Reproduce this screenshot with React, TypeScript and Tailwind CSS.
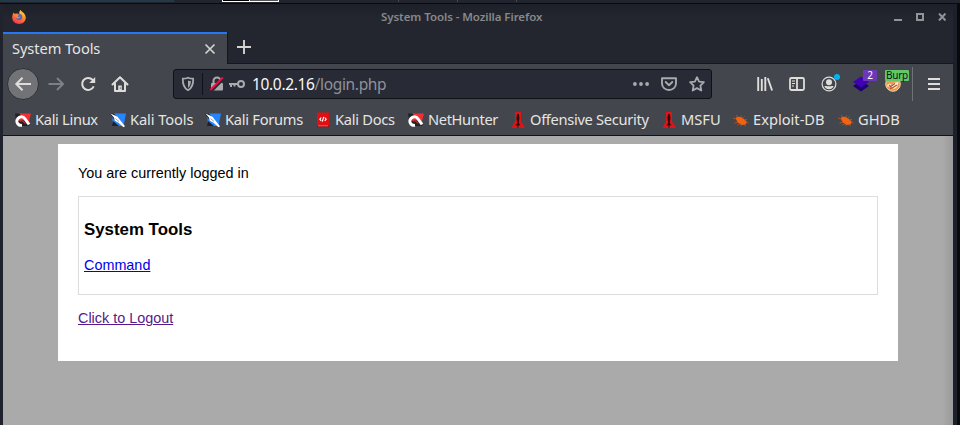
import React from "react";

type IconName = "magnet" | "knife" | "docs" | "offsec" | "bug";

function BookmarkIcon({ name }: { name: IconName }) {
  return (
    <svg width="16" height="16" viewBox="0 0 16 16" className="shrink-0">
      {name === "magnet" && (
        <>
          <path d="M4 1.500h12l-3 11H3z" fill="#f22f35" />
          <path d="M0 1.500h4.500l1.500 2L1 8zM3 9l9-1 2 6H5z" fill="#202126" />
          <path d="M14 12.300L10 6.800C8.700 5 6.400 4.300 4.300 5.400 2 6.600 1.200 9 2.400 11.200c.8 1.500 2.500 2.300 4.600 2.100" fill="none" stroke="#fff" strokeWidth="2.900" />
          <path d="M5 9.700c1-1.300 2.300-1.200 3.300-.2l2 2.200" fill="none" stroke="#c5222b" strokeWidth="1.200" />
        </>
      )}
      {name === "knife" && (
        <>
          <path d="M2 1.500h14l-2.500 12.500H3z" fill="#2684ff" />
          <path d="M0 1.500h4l3 4-3 2zM3 9l6 5H2z" fill="#202126" />
          <path d="M0.500 1.500l7 3.200 3.500 4.600 4 5-1.500 1-5-4.600-3.600-2-1-3.200z" fill="#fff" />
          <path d="M5.500 6.500l3.500 3" stroke="#777" strokeWidth=".7" />
        </>
      )}
      {name === "docs" && (
        <>
          <path d="M2 .5h12v15H2z" fill="#e01012" />
          <path d="M2 13h12v2.500H2z" fill="#9e1115" />
          <path d="M3 13.800h10" stroke="#e7a0a0" strokeWidth=".7" />
          <path d="M6.300 5.500L4.800 7.200l1.500 1.600M9.700 5.500l1.500 1.700-1.500 1.600M8.700 5l-1.400 4.600" fill="none" stroke="#fff" strokeWidth="1.100" />
        </>
      )}
      {name === "offsec" && (
        <>
          <path d="M5 0h6v9.500l3.500 5V16H2v-1.500l3-5z" fill="#db1519" />
          <path d="M7.200 2h1.600l.6 4-.6 5 1.700 2.500-2-.5V15.500H7.400V13l-2 .7L7.200 11l-.8-5z" fill="#31080b" />
        </>
      )}
      {name === "bug" && (
        <>
          <path d="M2.500 6c2.500-2.200 5.800-1.500 8 .8l3.200 2.700-1 3.100-4 .5-4-2.500z" fill="#f26311" />
          <path d="M2.500 7L0 6M4.500 5.500L3.500 3M7.500 5.500l1-2M9.500 6.500l2-2M11 8l3-.5M13 10.500l2.500.5M4.500 10.500l-3 .5M6.500 12l-2 1M11 12.500l1.500 1.500M8.500 12.500l-1 1.500" stroke="#c9551e" strokeWidth=".8" />
        </>
      )}
    </svg>
  );
}

function Bookmark({ icon, label, className }: { icon: IconName; label: string; className: string }) {
  return (
    <div className={`flex h-full shrink-0 items-center gap-1 whitespace-nowrap ${className}`}>
      <BookmarkIcon name={icon} />
      <span className="-mt-[2px]">{label}</span>
    </div>
  );
}

function FirefoxLogo() {
  return (
    <svg width="14" height="14" viewBox="0 0 14 14">
      <defs>
        <linearGradient id="flame" x1=".8" y1="0" x2=".3" y2="1">
          <stop offset="0" stopColor="#ffe347" />
          <stop offset=".45" stopColor="#ff8a24" />
          <stop offset="1" stopColor="#f52d5d" />
        </linearGradient>
      </defs>
      <path d="M8.500 0c.6 1.300 2 1.700 3.200 3 3 3.400 2.600 7-.2 9.500-2.600 2-6.500 1.900-9 0C-.3 10.300-.5 6 1.500 2.500l1 1.300L5 3.500 7.300 4C7 2.300 7.400 1 8.500 0z" fill="url(#flame)" />
      <circle cx="7.200" cy="6.900" r="3" fill="#3b69d4" />
      <path d="M2.500 4l3 .3 1.800.8-2 1.200c1 .8 2.600.6 3.400.3-.6 2-3.500 2.300-4.700.8z" fill="#ff8729" />
    </svg>
  );
}

function NavIcon({ name }: { name: "forward" | "reload" | "home" }) {
  return (
    <svg width="18" height="18" viewBox="0 0 18 18" fill="none" strokeWidth="2">
      {name === "forward" && <path d="M1.500 9h14M10 3l6 6-6 6" stroke="#7d8085" />}
      {name === "reload" && (
        <>
          <path d="M14.700 11.300A6 6 0 1 1 13.500 4.700L15 6.300" stroke="#deddda" />
          <path d="M16.200 2v6h-6z" fill="#deddda" />
        </>
      )}
      {name === "home" && (
        <>
          <path d="M1.500 9.500L9 2.200l7.500 7.300M4 8.500V16h10V8.500" stroke="#deddda" strokeLinejoin="round" strokeLinecap="round" />
          <path d="M7.200 15.500v-5h3.600v5z" fill="#deddda" />
          <path d="M9.300 12.500v1.200" stroke="#43464d" strokeWidth="1" />
        </>
      )}
    </svg>
  );
}

function AddressBar() {
  return (
    <div className="ml-[44px] flex h-[30px] w-[539px] shrink-0 items-center rounded-[3px] border border-[#111217] bg-[#282a36]">
      <svg className="ml-[6px]" width="16" height="16" viewBox="0 0 16 16">
        <path d="M8 1.700c1.700.9 3.600 1 5.200 1 .2 5.500-1.300 9.400-5.200 11.500C4.100 12.100 2.600 8.200 2.800 2.700c1.600 0 3.500-.1 5.200-1z" fill="none" stroke="#a9aaad" strokeWidth="1.800" strokeLinejoin="round" />
        <path d="M8 4.400c1 .4 2 .6 2.900.6-.1 3.500-1 5.500-2.900 7z" fill="#a9aaad" />
      </svg>
      <div className="ml-[6px] h-[22px] w-px bg-[#111217]" />
      <svg className="ml-[6px]" width="16" height="16" viewBox="0 0 16 16">
        <path d="M4.500 7V5a3.500 3.500 0 0 1 7 0v2" fill="none" stroke="#a9aaad" strokeWidth="2" />
        <rect x="2" y="7" width="12" height="7.500" rx="1" fill="#a9aaad" />
        <path d="M2.500 15L15.500 2" stroke="#282a36" strokeWidth="2.500" />
        <path d="M1.300 14L14 1.300" stroke="#f40d43" strokeWidth="1.900" />
      </svg>
      <svg className="ml-[4px]" width="16" height="16" viewBox="0 0 16 16" fill="none" stroke="#a9aaad" strokeWidth="2">
        <circle cx="12" cy="8" r="3" />
        <path d="M0 8h9M2 8v3M5.500 8v2.500" />
      </svg>
      <div className="ml-[7px] text-[15.500px] leading-[22px] tracking-[-0.34px] text-[#909197]">
        <span className="text-[#f8f8f6]">10.0.2.16</span>/login.php
      </div>
      <svg className="ml-auto" width="16" height="16" viewBox="0 0 16 16" fill="#a9aaad">
        <circle cx="1.900" cy="8" r="1.900" /><circle cx="8" cy="8" r="1.900" /><circle cx="14.100" cy="8" r="1.900" />
      </svg>
      <svg className="ml-[12px]" width="16" height="16" viewBox="0 0 16 16" fill="none" stroke="#a9aaad" strokeWidth="1.900" strokeLinejoin="round" strokeLinecap="round">
        <path d="M1 2.200h14v5.300a7 6.500 0 0 1-14 0zM4.700 6L8 9.200 11.300 6" />
      </svg>
      <svg className="mr-[6px] ml-[12px]" width="16" height="16" viewBox="0 0 16 16" fill="none" stroke="#a9aaad" strokeWidth="1.800" strokeLinejoin="round">
        <path d="M8 1.200l2.100 4.400 4.800.6-3.500 3.400.9 4.900L8 12.100l-4.300 2.400.9-4.900L1.100 6.200l4.800-.6z" />
      </svg>
    </div>
  );
}

function ToolbarActions() {
  return (
    <div className="ml-[45px] flex h-full items-center">
      <svg width="16" height="16" viewBox="0 0 16 16" stroke="#deddda" strokeWidth="1.900" fill="none">
        <path d="M1.200 1v14M4.800 3v12M8.300 1v14M10.800 2.300l4.300 12.200" />
      </svg>
      <svg className="ml-4" width="16" height="16" viewBox="0 0 16 16" stroke="#deddda" strokeWidth="1.800" fill="none">
        <rect x="1" y="2" width="14" height="12" rx="1.500" /><path d="M8 2v12" />
        <path d="M3 5h3M3 7.500h3M3 10h2" strokeWidth="1.100" />
      </svg>
      <div className="relative ml-4 h-4 w-4">
        <svg width="16" height="16" viewBox="0 0 16 16" fill="#deddda">
          <circle cx="8" cy="8" r="6.900" fill="none" stroke="#deddda" strokeWidth="1.200" />
          <circle cx="8" cy="6.200" r="3" />
          <path d="M3.300 10.300c1.800-.6 2.400 0 4.700 0s2.900-.6 4.700 0A5.200 5.200 0 0 1 3.300 10.300z" />
        </svg>
        <span className="absolute -top-[2px] left-[13px] h-1.5 w-1.5 rounded-full bg-[#00b3f4]" />
      </div>
      <div className="relative ml-4 h-4 w-4">
        <svg width="16" height="16" viewBox="0 0 16 16">
          <path d="M8 4.500l8 5.500-8 5.500L0 10z" fill="#1e006f" />
          <path d="M8 .5l8 5.500-8 5.500L0 6z" fill="#4100b3" />
        </svg>
        <span className="absolute -top-[6px] left-[10px] h-[11px] w-[14px] rounded-[1px] bg-[#6b38b8] text-center text-[10px] leading-[11px] text-white">2</span>
      </div>
      <div className="relative ml-4 h-4 w-4">
        <svg width="16" height="16" viewBox="0 0 16 16">
          <circle cx="8" cy="8" r="7.300" fill="#f0994d" stroke="#f5cfac" />
          <path d="M1.500 10l3-2.500L7 9l2-2 4.500-1-1.500 5-3 2-2.500-2z" fill="#fff2de" />
          <path d="M4 9l1.700 1.400 4.300-3M5 12.500l3-1 4-2.500" fill="none" stroke="#a95225" strokeWidth="1.200" />
        </svg>
        <span className="absolute -top-[6px] left-0 h-[11px] w-6 rounded-[1px] bg-[#63c769] text-center text-[10px] leading-[11px] tracking-[-0.2px] text-[#101810]">Burp</span>
      </div>
      <div className="ml-[11px] h-[34px] w-px bg-[#6f7175]" />
      <svg className="ml-[15px]" width="12" height="16" viewBox="0 0 12 16" stroke="#deddda" strokeWidth="2">
        <path d="M0 3h12M0 8h12M0 13h12" />
      </svg>
    </div>
  );
}

export default function App() {
  return (
    <div className="flex h-[425px] w-[960px] flex-col overflow-hidden bg-[#191c23] font-['Noto_Sans',sans-serif]">
      <div className="flex h-[3px] shrink-0 bg-[#21232d]">
        <div className="h-[2px] w-[174px] bg-[#243947]" />
        <div className="ml-12 h-[2px] w-[28px] border-x border-b border-white bg-black" />
        <div className="h-[2px] w-[29px] border-r border-b border-white bg-[#555]" />
        <div className="ml-[119px] h-[2px] w-[59px] border-l border-[#444751]" />
        <div className="h-[2px] w-[59px] border-l border-[#444751]" />
        <div className="h-[2px] w-[60px] border-l border-[#444751]" />
      </div>
      <div className="flex min-h-0 flex-1 border-t border-[#090a0e]">
        <div className="w-[3px] shrink-0 bg-[#20232d]" />
        <div className="flex w-[950px] shrink-0 flex-col">
          <header className="flex h-[28px] shrink-0 items-center bg-linear-to-b from-[#1d2028] to-[#23262e] to-50% pl-[9px]">
            <div className="-mt-[3px] flex w-[369px] items-center"><FirefoxLogo /></div>
            <span className="-mt-[2px] whitespace-nowrap text-[11.500px] font-semibold tracking-[-0.07px] text-[#86888b]">System Tools - Mozilla Firefox</span>
            <svg className="-mt-[2px] mr-[7px] ml-auto" width="52" height="8" viewBox="0 0 52 8" fill="none" stroke="#929396" strokeWidth="2">
              <path d="M0 7h8M45 .5l6.500 7M51.500 .5l-6.500 7" /><rect x="23" y="1" width="6" height="6" />
            </svg>
          </header>
          <div className="flex h-[32px] shrink-0 bg-[#23262e]">
            <div className="flex w-[224px] items-center justify-between border-t-2 border-[#2477f5] bg-[#43464d] pr-[11px] pl-[9px]">
              <span className="-mt-[3px] text-[14.670px] tracking-[-0.08px] text-[#e6e5e2]">System Tools</span>
              <svg className="-mt-px" width="12" height="12" viewBox="0 0 12 12" stroke="#d4d3d0" strokeWidth="1.700"><path d="M1.500 1.500l9 9M10.500 1.500l-9 9" /></svg>
            </div>
            <div className="flex flex-1 items-center border-b border-l border-[#15171d] pb-px pl-[9px]">
              <svg width="14" height="14" viewBox="0 0 14 14" stroke="#d4d3d0" strokeWidth="1.900"><path d="M7 0v14M0 7h14" /></svg>
            </div>
          </div>
          <nav className="flex h-[40px] shrink-0 items-center bg-[#43464d] pl-[4px]">
            <div className="flex h-8 w-8 items-center justify-center rounded-full border border-[#303238] bg-[#727377]">
              <svg width="18" height="18" viewBox="0 0 18 18" fill="none" stroke="#deddda" strokeWidth="2"><path d="M17 9H2M8.500 2.800L2.300 9l6.200 6.200" /></svg>
            </div>
            <div className="ml-[8px] flex gap-[14px]">
              <NavIcon name="forward" /><NavIcon name="reload" /><NavIcon name="home" />
            </div>
            <AddressBar />
            <ToolbarActions />
          </nav>
          <div className="flex h-[32px] shrink-0 items-center border-b border-[#111217] bg-[#43464d] pl-[12px] text-[14.670px] leading-[20px] text-[#e6e5e2]">
            <Bookmark icon="magnet" label="Kali Linux" className="w-[95px] tracking-[-0.32px]" />
            <Bookmark icon="knife" label="Kali Tools" className="w-[95px] tracking-[-0.1px]" />
            <Bookmark icon="knife" label="Kali Forums" className="w-[110px] tracking-[-0.27px]" />
            <Bookmark icon="docs" label="Kali Docs" className="w-[93px] tracking-[-0.27px]" />
            <Bookmark icon="magnet" label="NetHunter" className="w-[102px] tracking-[-0.36px]" />
            <Bookmark icon="offsec" label="Offensive Security" className="w-[151px] tracking-[-0.31px]" />
            <Bookmark icon="offsec" label="MSFU" className="w-[72px]" />
            <Bookmark icon="bug" label="Exploit-DB" className="w-[105px]" />
            <Bookmark icon="bug" label="GHDB" className="w-[66px]" />
          </div>
          <main className="flex-1 bg-[#aaa] bg-linear-to-r from-[#aaa] from-[939px] to-[#9a9a9a] pt-[8px] pl-[55px] font-['Liberation_Sans',Arial,sans-serif] text-[14.400px] leading-[17px] text-black">
            <div className="h-[217px] w-[840px] bg-white px-5 pt-[21px]">
              <p>You are currently logged in</p>
              <section className="mt-[14px] h-[99px] border border-[#ddd] px-[5px] pt-[23px]">
                <h3 className="text-[16.850px] leading-[19px] font-bold">System Tools</h3>
                <p className="mt-[18px]"><a href="#" className="text-[#0000ee] underline">Command</a></p>
              </section>
              <p className="mt-[15px]"><a href="#" className="text-[#551a8b] underline">Click to Logout</a></p>
            </div>
          </main>
        </div>
        <div className="w-[4px] shrink-0 bg-[#1b202b]" />
        <div className="w-[3px] shrink-0 bg-[#08090c]" />
      </div>
    </div>
  );
}
